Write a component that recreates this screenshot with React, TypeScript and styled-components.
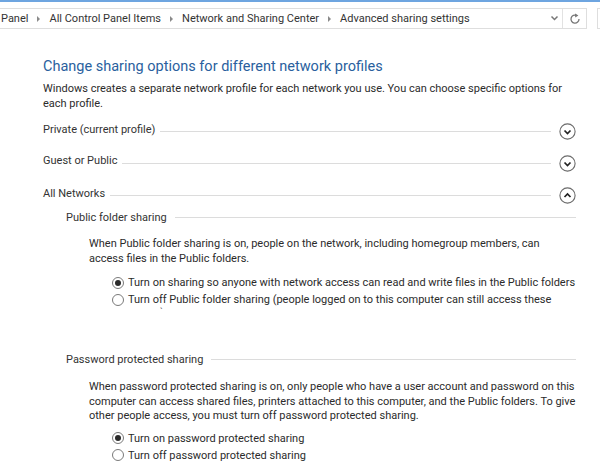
import styled, { createGlobalStyle } from "styled-components";

const GlobalStyle = createGlobalStyle`
    html, body {
        margin: 0;
        padding: 0;
        background: #fff;
        overflow: hidden;
    }
`

const Page = styled.div`
    width: 600px;
    height: 476px;
    overflow: hidden;
    font-family: Roboto, "Noto Sans", sans-serif;
    font-size: 11px;
    color: #2b2b2b;
    background: #fff;
`

const TopStrip = styled.div`
    height: 2px;
    background: #6ea5e0;
`

const AddressRow = styled.div`
    display: flex;
    gap: 10px;
    padding-top: 6px;
    height: 21px;
`

const AddressBar = styled.div`
    width: 586px;
    flex: none;
    height: 19px;
    display: flex;
    align-items: center;
    border: 1px solid #dedede;
    border-left: none;
`

const Crumbs = styled.div`
    flex: 1;
    display: flex;
    align-items: center;
    padding-left: 1px;
    white-space: nowrap;
    color: #333;
`

const CrumbArrow = styled.span`
    width: 0;
    height: 0;
    margin: 0 9px;
    border-left: 3px solid #8a8a8a;
    border-top: 3px solid transparent;
    border-bottom: 3px solid transparent;
`

const BarButton = styled.div<{ $width: number }>`
    width: ${p => p.$width}px;
    height: 19px;
    display: flex;
    align-items: center;
    justify-content: center;
`

const BarDivider = styled.div`
    width: 1px;
    height: 19px;
    background: #e2e2e2;
`

const SearchStub = styled.div`
    flex: 1;
    height: 19px;
    border: 1px solid #dedede;
    border-right: none;
`

const Content = styled.div`
    padding: 28px 24px 0 43px;
`

const Title = styled.h1`
    margin: 0;
    font-size: 14.5px;
    line-height: 20px;
    font-weight: 400;
    color: #2a5f9e;
`

const Description = styled.p<{ $indent?: number; $top?: number }>`
    margin: ${p => p.$top ?? 0}px 0 0 ${p => p.$indent ?? 0}px;
    font-size: 11px;
    line-height: 14.5px;
    color: #2b2b2b;
`

const ProfileRow = styled.div<{ $top: number }>`
    display: flex;
    align-items: center;
    height: 18px;
    margin-top: ${p => p.$top}px;
    gap: 5px;
`

const SectionRow = styled.div<{ $top: number }>`
    display: flex;
    align-items: center;
    height: 16px;
    margin: ${p => p.$top}px 0 0 23px;
    gap: 8px;
`

const RowLabel = styled.span<{ $lift?: number }>`
    white-space: nowrap;
    color: #333;
    margin-bottom: ${p => p.$lift ?? 0}px;
`

const RowLine = styled.div`
    flex: 1;
    height: 1px;
    background: #dcdcdc;
`

const RoundButton = styled.div`
    flex: none;
    width: 17px;
    height: 17px;
    margin-left: 3px;
    display: flex;
    align-items: center;
    justify-content: center;
`

const RadioList = styled.div<{ $top: number; $gap: number }>`
    display: flex;
    flex-direction: column;
    gap: ${p => p.$gap}px;
    margin: ${p => p.$top}px 0 0 69px;
`

const RadioRow = styled.div`
    display: flex;
    align-items: center;
    gap: 4px;
    height: 15px;
    white-space: nowrap;
    color: #2b2b2b;
`

const Radio = styled.span<{ $checked?: boolean }>`
    flex: none;
    width: 12px;
    height: 12px;
    box-sizing: border-box;
    border-radius: 50%;
    border: 1px solid #7a7a7a;
    background: #fff;
    display: flex;
    align-items: center;
    justify-content: center;

    &::after {
        content: "";
        display: ${p => (p.$checked ? "block" : "none")};
        width: 6px;
        height: 6px;
        border-radius: 50%;
        background: #2a2a2a;
    }
`

const ClippedTick = styled.div`
    height: 6px;
    margin: 2px 0 0 117px;
    font-size: 9px;
    line-height: 6px;
    color: #555;
`

const Chevron = ({ up }: { up?: boolean }) => (
    <svg width="17" height="17" viewBox="0 0 17 17" fill="none">
        <circle cx="8.5" cy="8.5" r="7.6" stroke="#6b6b6b" strokeWidth="1.1" />
        <path
            d={up ? "M5.5 10 L8.5 7 L11.5 10" : "M5.5 7.5 L8.5 10.5 L11.5 7.5"}
            stroke="#222"
            strokeWidth="1.7"
        />
    </svg>
);

const App = () => {
    return (
        <Page>
            <GlobalStyle/>
            <TopStrip/>
            <AddressRow>
                <AddressBar>
                    <Crumbs>
                        Panel<CrumbArrow/>
                        All Control Panel Items<CrumbArrow/>
                        Network and Sharing Center<CrumbArrow/>
                        Advanced sharing settings
                    </Crumbs>
                    <BarButton $width={16}>
                        <svg width="9" height="7" viewBox="0 0 9 7" fill="none">
                            <path d="M1.5 1.5 L4.5 4.5 L7.5 1.5" stroke="#777" strokeWidth="1.5"/>
                        </svg>
                    </BarButton>
                    <BarDivider/>
                    <BarButton $width={23}>
                        <svg width="12" height="12" viewBox="0 0 12 12" fill="none">
                            <path d="M7.6 2.4 A4 4 0 1 0 10 6" stroke="#777" strokeWidth="1.3"/>
                            <path d="M6 0.4 L9.4 2.6 L6.2 4.6 Z" fill="#777"/>
                        </svg>
                    </BarButton>
                </AddressBar>
                <SearchStub/>
            </AddressRow>
            <Content>
                <Title>Change sharing options for different network profiles</Title>
                <Description $top={5}>
                    Windows creates a separate network profile for each network you use. You can choose specific options for each profile.
                </Description>
                <ProfileRow $top={11}>
                    <RowLabel $lift={3}>Private (current profile)</RowLabel>
                    <RowLine/>
                    <RoundButton><Chevron/></RoundButton>
                </ProfileRow>
                <ProfileRow $top={14}>
                    <RowLabel $lift={5}>Guest or Public</RowLabel>
                    <RowLine/>
                    <RoundButton><Chevron/></RoundButton>
                </ProfileRow>
                <ProfileRow $top={14}>
                    <RowLabel $lift={3}>All Networks</RowLabel>
                    <RowLine/>
                    <RoundButton><Chevron up/></RoundButton>
                </ProfileRow>
                <SectionRow $top={5}>
                    <RowLabel>Public folder sharing</RowLabel>
                    <RowLine/>
                </SectionRow>
                <Description $indent={46} $top={12}>
                    When Public folder sharing is on, people on the network, including homegroup members, can access files in the Public folders.
                </Description>
                <RadioList $top={9} $gap={2}>
                    <RadioRow>
                        <Radio $checked/>
                        Turn on sharing so anyone with network access can read and write files in the Public folders
                    </RadioRow>
                    <RadioRow>
                        <Radio/>
                        Turn off Public folder sharing (people logged on to this computer can still access these
                    </RadioRow>
                </RadioList>
                <ClippedTick>`</ClippedTick>
                <SectionRow $top={36}>
                    <RowLabel>Password protected sharing</RowLabel>
                    <RowLine/>
                </SectionRow>
                <Description $indent={46} $top={13}>
                    When password protected sharing is on, only people who have a user account and password on this computer can access shared files, printers attached to this computer, and the Public folders. To give other people access, you must turn off password protected sharing.
                </Description>
                <RadioList $top={7} $gap={2}>
                    <RadioRow>
                        <Radio $checked/>
                        Turn on password protected sharing
                    </RadioRow>
                    <RadioRow>
                        <Radio/>
                        Turn off password protected sharing
                    </RadioRow>
                </RadioList>
            </Content>
        </Page>
    );
};

export default App;
